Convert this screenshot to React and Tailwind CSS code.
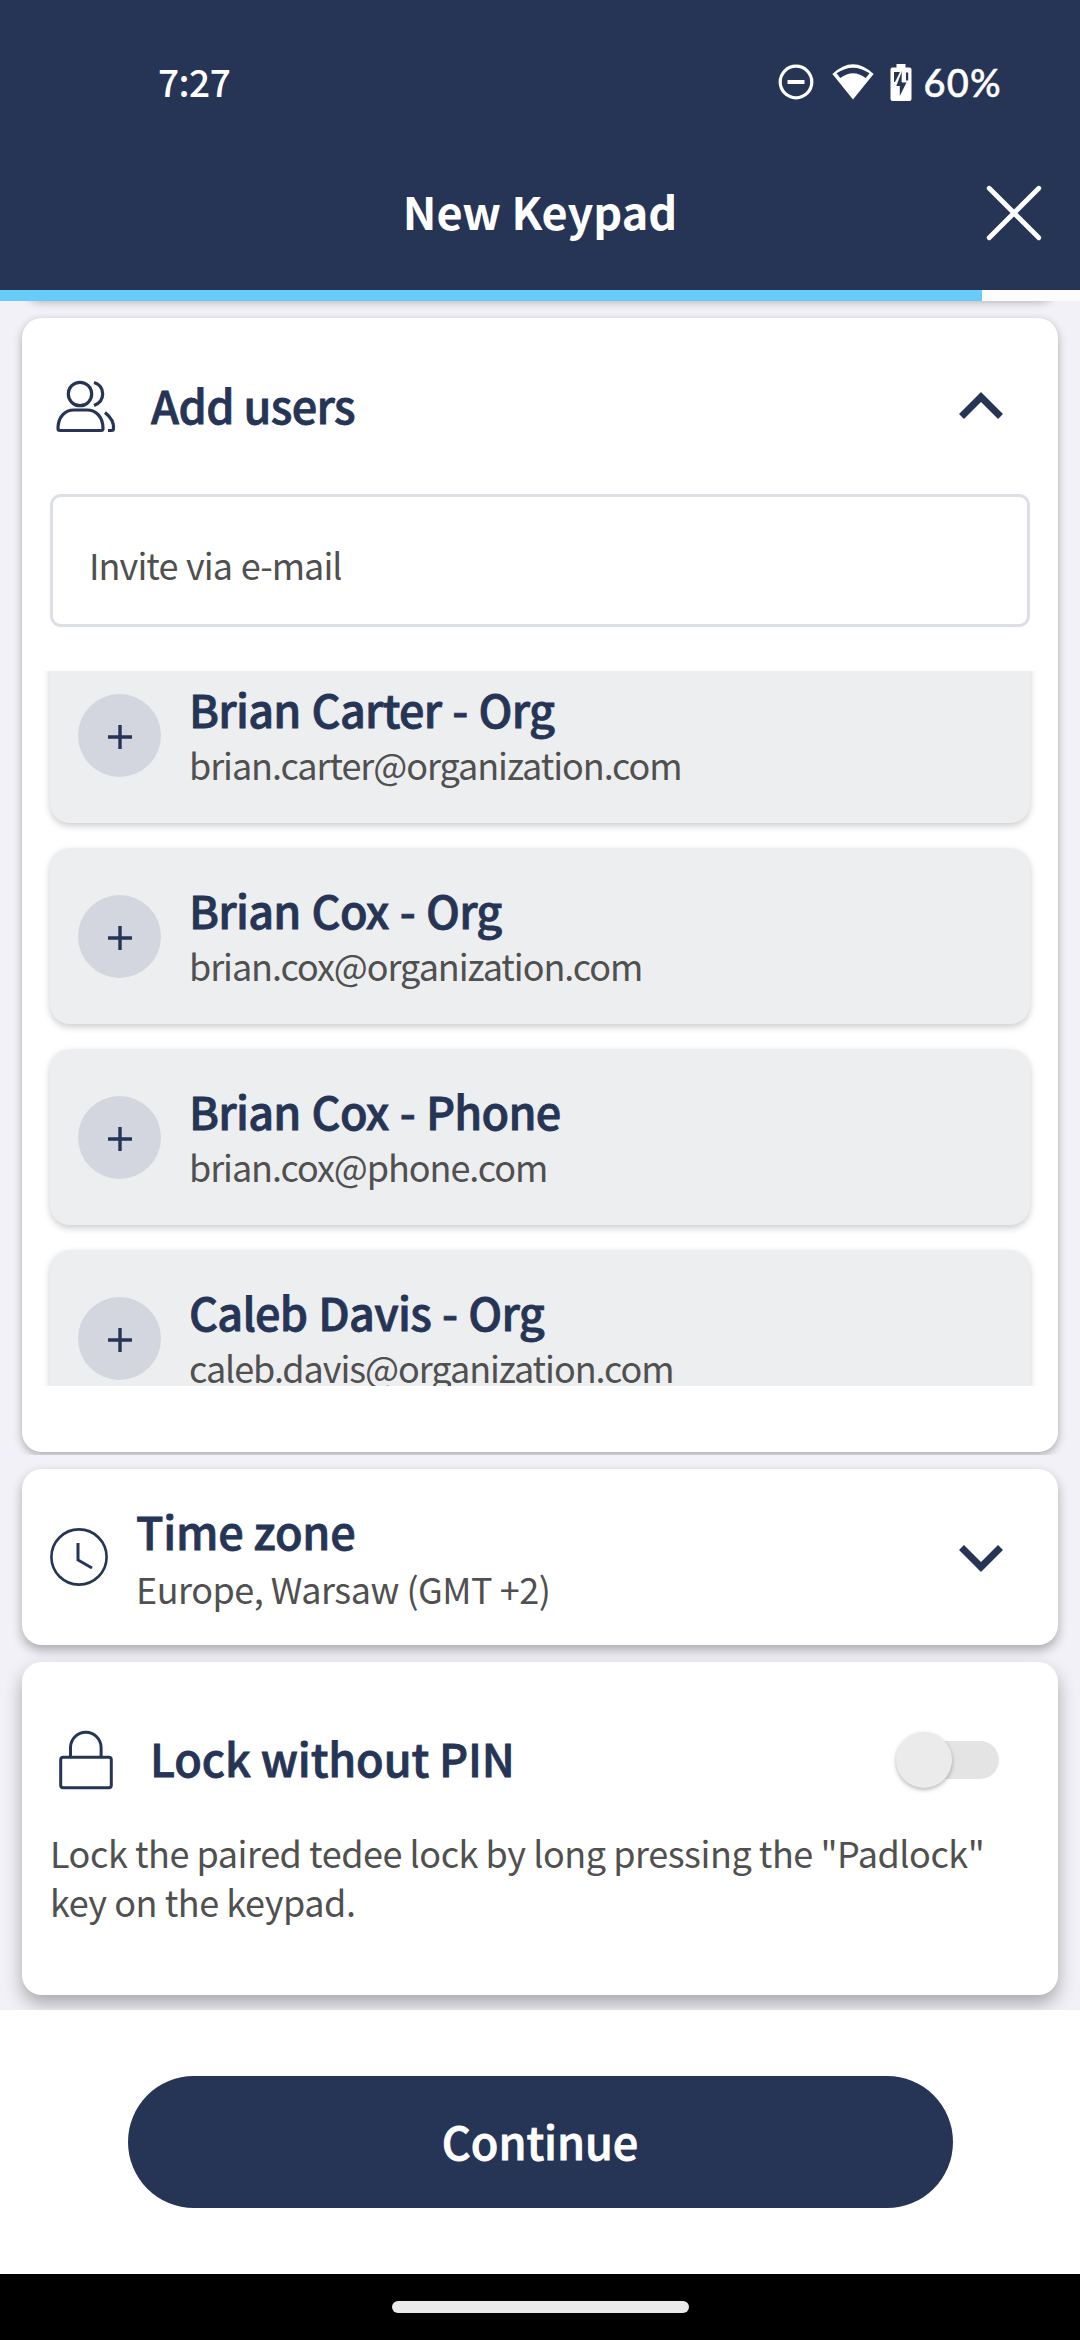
const NAVY = "#263456";

const users = [
  { name: "Brian Carter - Org", email: "brian.carter@organization.com" },
  { name: "Brian Cox - Org", email: "brian.cox@organization.com" },
  { name: "Brian Cox - Phone", email: "brian.cox@phone.com" },
  { name: "Caleb Davis - Org", email: "caleb.davis@organization.com" },
];

function StatusBar() {
  return (
    <div className="flex h-[164px] items-center justify-between pl-[158px] pr-[78px] text-white">
      <span className="text-[37px] font-medium leading-[40px] tracking-[-0.5px] -translate-y-[1px]">7:27</span>
      <div className="flex items-center">
        <svg width="36" height="36" viewBox="0 0 36 36" fill="none" stroke="white" className="mr-[18px]">
          <circle cx="18" cy="18" r="15.8" strokeWidth="3.2" />
          <path d="M9.5 18h17" strokeWidth="4" />
        </svg>
        <svg width="42" height="36" viewBox="0 0 42 36" className="mr-[16px]">
          <path d="M21 35.500.4 10Q21-9.500 41.600 10z" fill="white" />
          <path d="M4.500 9.300Q21-2 37.500 9.300L33.700 14Q21 4.500 8.300 14z" fill={NAVY} />
        </svg>
        <svg width="22" height="37" viewBox="0 0 22 37" className="mr-[11px]">
          <path fill="white" d="M6.500 0h9v3.500h4q2 0 2 2V35q0 2-2 2H2.500q-2 0-2-2V5.500q0-2 2-2h4z" />
          <path d="M4 8h6L5 18H4zM16 8.500h2.200v8H16z" fill={NAVY} />
          <path d="M12 7v11.500h4.500L9.800 32V22H6.300z" fill={NAVY} />
          <path d="M12.400 8v10" stroke="white" strokeWidth="1.500" />
        </svg>
        <span className="font-['Lato'] text-[38px] font-medium leading-[40px] tracking-[1.3px] [-webkit-text-stroke:0.5px_white]">60%</span>
      </div>
    </div>
  );
}

function TitleBar() {
  return (
    <div className="grid h-[126px] grid-cols-[1fr_auto_1fr] items-start pt-[20px] text-white">
      <span />
      <h1 className="mt-[-3px] text-[45px] font-bold leading-[60px]">New Keypad</h1>
      <svg width="56" height="56" viewBox="0 0 56 56" className="mr-[38px] mt-[1px] justify-self-end" stroke="white" strokeWidth="4.800" strokeLinecap="round">
        <path d="M3.200 3.200 52.800 52.800M52.800 3.200 3.200 52.800" />
      </svg>
    </div>
  );
}

function UsersIcon() {
  return (
    <svg width="60" height="53" viewBox="0 0 60 53" fill="none" stroke={NAVY} strokeWidth="3.200" strokeLinecap="butt" className="-ml-[1px]">
      <circle cx="24" cy="14" r="11.700" />
      <path d="M38 2.500c5.500 1.500 8.700 6 8.700 11.300S43.500 23.500 38 25.500" />
      <path d="M4 50.500h41q2 0 2-2C47 37 40 30 31 30H18C9 30 2 37 2 48.500q0 2 2 2z" />
      <path d="M49 32.500c5 4 9 9.500 8.500 16q0 2-2 2H52" />
    </svg>
  );
}

function Chevron({ down }) {
  return (
    <svg width="44" height="27" viewBox="0 0 44 27" fill="none" stroke={NAVY} strokeWidth="7" className={down ? "translate-y-[1px] rotate-180" : "-translate-y-[1px]"}>
      <path d="M2.500 24.500 22 5l19.500 19.500" />
    </svg>
  );
}

function ClockIcon() {
  return (
    <svg width="58" height="58" viewBox="0 0 58 58" fill="none" stroke={NAVY}>
      <circle cx="29" cy="29" r="27.600" strokeWidth="2.600" />
      <path d="M28 15v17l14 8" strokeWidth="3" />
    </svg>
  );
}

function LockIcon() {
  return (
    <svg width="54" height="60" viewBox="0 0 54 60" fill="none" stroke={NAVY} strokeWidth="3">
      <rect x="1.700" y="27.200" width="50.600" height="30.600" rx="2.500" />
      <path d="M11.500 27V17.500a15.300 15.300 0 0 1 30.600 0V27" />
    </svg>
  );
}

const heading = "text-[45px] font-medium leading-[60px] text-[#263456] [-webkit-text-stroke:0.8px_#263456]";

function UserRow({ name, email }) {
  return (
    <li className="flex h-[176px] shrink-0 rounded-[20px] bg-[#edeef0] pl-[28px] shadow-[0_3px_7px_rgba(0,0,0,0.2)]">
      <button className="mt-[47px] flex size-[83px] items-center justify-center rounded-full bg-[#d3d6de]">
        <svg width="24" height="24" viewBox="0 0 24 24" stroke={NAVY} strokeWidth="3.400" className="mt-[3px]">
          <path d="M12 0v24M0 12h24" />
        </svg>
      </button>
      <div className="ml-[28px] pt-[32px]">
        <p className={heading + " tracking-[-0.75px] [word-spacing:1.6px]"}>{name}</p>
        <p className="text-[36px] leading-[50px] tracking-[-1.07px] text-[#505050]">{email}</p>
      </div>
    </li>
  );
}

function AddUsersCard() {
  return (
    <section className="rounded-[20px] bg-white px-[28px] pb-[66px] shadow-[0_3px_8px_rgba(0,0,0,0.3)]">
      <div className="flex h-[176px] items-center pl-[7px] pr-[27px]">
        <UsersIcon />
        <h2 className={"ml-[35px] flex-1 -translate-y-[1px] tracking-[-0.6px] " + heading}>Add users</h2>
        <Chevron />
      </div>
      <div className="flex h-[133px] items-center rounded-[11px] border-[3px] border-[#dce0e5] pl-[36px] pt-[7px]">
        <span className="text-[36px] leading-[50px] tracking-[-0.95px] text-[#505050] [word-spacing:1.5px]">Invite via e-mail</span>
      </div>
      <ul className="-mx-2 mt-[44px] flex h-[715px] flex-col gap-[25px] overflow-hidden px-2 [&>li:first-child]:-mt-[24px]">
        {users.map((u) => (
          <UserRow key={u.email} {...u} />
        ))}
      </ul>
    </section>
  );
}

function TimeZoneCard() {
  return (
    <section className="mx-[22px] mt-[14px] flex h-[176px] items-center rounded-[20px] bg-white pl-[28px] pr-[55px] shadow-[0_5px_11px_rgba(0,0,0,0.3)]">
      <ClockIcon />
      <div className="ml-[28px] flex-1">
        <h2 className={"tracking-[-0.2px] " + heading}>Time zone</h2>
        <p className="mt-[2px] text-[36px] leading-[50px] tracking-[-0.5px] text-[#505050]">Europe, Warsaw (GMT +2)</p>
      </div>
      <Chevron down />
    </section>
  );
}

function LockCard() {
  return (
    <section className="mx-[22px] mt-[17px] h-[333px] rounded-[20px] bg-white px-[28px] pt-[67px] shadow-[0_9px_18px_rgba(0,0,0,0.3)]">
      <div className="flex h-[62px] items-center pl-[9px] pr-[31px]">
        <LockIcon />
        <h2 className={"ml-[37px] flex-1 -translate-y-[2px] tracking-[-0.15px] " + heading}>Lock without PIN</h2>
        <div className="flex h-[38px] w-[99px] items-center rounded-full bg-[#e4e4e4]">
          <span className="-ml-[4px] size-[56px] rounded-full bg-[#ebebeb] shadow-[0_2px_4px_rgba(0,0,0,0.28)]" />
        </div>
      </div>
      <p className="mt-[37px] text-[36px] leading-[49px] tracking-[-0.46px] text-[#505050]">
        Lock the paired tedee lock by long pressing the "Padlock"
        <br />
        key on the keypad.
      </p>
    </section>
  );
}

export default function App() {
  return (
    <div className="flex h-[2340px] w-[1080px] flex-col overflow-hidden bg-white font-['Noto_Sans_CJK_SC',sans-serif]">
      <header className="shrink-0 bg-[#263456]">
        <StatusBar />
        <TitleBar />
        <div className="h-[11px] bg-[#fcfcfc]">
          <div className="h-full w-[982px] bg-[#69cbf8]" />
        </div>
      </header>
      <main className="h-[1709px] shrink-0 overflow-hidden bg-[#f2f1f7]">
        <div className="mx-[22px] -mt-[40px] h-[40px] rounded-[20px] bg-white shadow-[0_1px_8px_rgba(0,0,0,0.28)]" />
        <div className="overflow-hidden px-[22px] pb-[3px] pt-[17px]">
          <AddUsersCard />
        </div>
        <TimeZoneCard />
        <LockCard />
      </main>
      <footer className="flex h-[264px] shrink-0 items-center justify-center bg-white">
        <button className="h-[132px] w-[825px] rounded-full bg-[#263456] pb-[3px] text-[45px] font-medium leading-[60px] tracking-[-0.1px] text-white [-webkit-text-stroke:0.8px_white]">Continue</button>
      </footer>
      <div className="flex h-[66px] shrink-0 items-center justify-center bg-black">
        <div className="h-[12px] w-[297px] rounded-full bg-[#eaeaea]" />
      </div>
    </div>
  );
}
